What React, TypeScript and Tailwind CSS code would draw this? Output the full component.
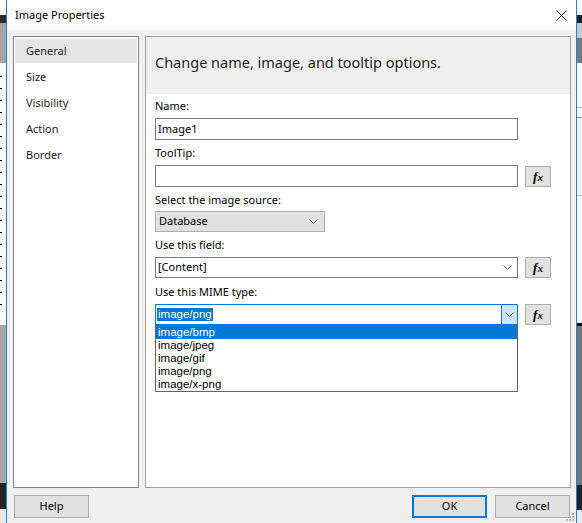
import React from 'react';

const font = { fontFamily: '"Noto Sans", "Segoe UI", sans-serif' };
const listFont = { fontFamily: '"Liberation Sans", Arial, sans-serif' };

const Fx: React.FC = () => (
  <button className="ml-[7px] flex h-[21px] w-[26px] items-center justify-center border border-[#adadad] bg-[#e1e1e1] text-black">
    <span className="text-[13px] font-bold italic leading-none" style={{ fontFamily: '"Liberation Serif", serif' }}>
      f<span className="text-[11px]">x</span>
    </span>
  </button>
);

const Chevron: React.FC = () => (
  <svg width="9" height="5" viewBox="0 0 9 5" className="text-[#606060]">
    <polyline points="0.5,0.5 4.5,4.5 8.5,0.5" fill="none" stroke="currentColor" strokeWidth="1" />
  </svg>
);

const Label: React.FC<{ children: React.ReactNode; className?: string }> = ({ children, className }) => (
  <div className={`h-[16px] text-[11px] leading-[16px] text-black ${className ?? ''}`}>{children}</div>
);

const LeftStrip: React.FC = () => (
  <div className="flex w-[6px] shrink-0 flex-col">
    <div className="h-[15px] bg-white" />
    <div className="h-[8px] bg-[#2b2b2b]" />
    <div className="h-[40px] bg-[#a6a6a6]" />
    <div className="flex h-[262px] flex-col bg-white pt-[13px]">
      {Array.from({ length: 20 }).map((_, i) => (
        <div key={i} className="mb-[11px] h-px w-[2px] bg-black" />
      ))}
    </div>
    <div className="h-[158px] bg-[#a6a6a6]" />
    <div className="h-[26px] bg-[#252525]" />
    <div className="flex-1 bg-[#e8e8e8]" />
  </div>
);

const RightStrip: React.FC = () => (
  <div className="flex w-[5px] shrink-0 flex-col">
    <div className="h-[15px] bg-white" />
    <div className="h-[8px] bg-[#222]" />
    <div className="h-[15px] bg-[#c8c8c8]" />
    <div className="h-[25px] bg-[#7a7a7a]" />
    <div className="h-[45px] border-b border-[#bbb] bg-white" />
    <div className="h-[10px] border-b border-[#888] bg-white" />
    <div className="h-[78px] border-b border-[#bbb] bg-[#f4f4f4]" />
    <div className="h-[127px] bg-white" />
    <div className="h-[3px] bg-black" />
    <div className="h-[159px] bg-[#777]" />
    <div className="h-[25px] bg-[#222]" />
    <div className="flex-1 bg-[#e8e8e8]" />
  </div>
);

const navItems = ['General', 'Size', 'Visibility', 'Action', 'Border'];
const mimeTypes = ['image/bmp', 'image/jpeg', 'image/gif', 'image/png', 'image/x-png'];

export default function App() {
  return (
    <div className="flex h-[523px] w-[582px] overflow-hidden bg-white" style={font}>
      <LeftStrip />
      <div className="flex w-[571px] shrink-0 flex-col border-x border-[#1883d7]">
        {/* title bar */}
        <div className="flex h-[30px] items-center justify-between bg-white pl-[8px] pr-[9px]">
          <span className="text-[11px] text-black">Image Properties</span>
          <svg width="11" height="11" viewBox="0 0 11 11">
            <path d="M0.5 0.5 L10.5 10.5 M10.5 0.5 L0.5 10.5" stroke="#111" strokeWidth="1" />
          </svg>
        </div>

        <div className="flex flex-1 flex-col bg-[#f0f0f0]">
          <div className="flex h-[458px] gap-[6px] pl-[6px] pr-[5px] pt-[6px]">
            {/* nav */}
            <div className="w-[126px] border border-[#828790] bg-white px-px pt-px">
              {navItems.map((item, i) => (
                <div key={item} className="h-[26px] py-px">
                  <div
                    className={`flex h-full items-center pl-[11px] text-[11px] text-[#1e1e1e] ${
                      i === 0 ? 'bg-[#e5e5e5]' : ''
                    }`}
                  >
                    {item}
                  </div>
                </div>
              ))}
            </div>

            {/* content */}
            <div className="flex flex-1 flex-col border border-[#a0a0a0] bg-white">
              <div className="flex h-[57px] items-center bg-[#f0f0f0] pb-[5px] pl-[9px]">
                <span className="text-[14.5px] text-[#1e1e1e]">Change name, image, and tooltip options.</span>
              </div>

              <div className="flex flex-col pl-[9px]">
                <Label className="mt-[4px]">Name:</Label>
                <div className="mt-[4px] flex h-[22px] w-[363px] items-center border border-[#7a7a7a] bg-white pl-[2px] text-[11px] text-black">
                  Image1
                </div>

                <Label className="mt-[5px]">ToolTip:</Label>
                <div className="mt-[4px] flex items-center">
                  <div className="h-[22px] w-[363px] border border-[#7a7a7a] bg-white" />
                  <Fx />
                </div>

                <Label className="mt-[5px]">Select the image source:</Label>
                <div className="mt-[3px] flex h-[21px] w-[170px] items-center justify-between border border-[#adadad] bg-[#e1e1e1] pl-[3px] pr-[6px] text-[11px] text-black">
                  <span>Database</span>
                  <Chevron />
                </div>

                <Label className="mt-[5px]">Use this field:</Label>
                <div className="mt-[4px] flex items-center">
                  <div className="flex h-[21px] w-[363px] items-center justify-between border border-[#7a7a7a] bg-white pl-[2px] pr-[5px] text-[11px] text-black">
                    <span>[Content]</span>
                    <Chevron />
                  </div>
                  <Fx />
                </div>

                <Label className="mt-[6px]">Use this MIME type:</Label>
                <div className="relative mt-[4px] flex items-center">
                  <div className="flex h-[21px] w-[363px] items-center border border-[#0078d7] bg-white">
                    <div className="flex flex-1 items-center pl-[1px]">
                      <span className="bg-[#0078d7] px-[1px] text-[11.5px] leading-[13px] text-white" style={listFont}>
                        image/png
                      </span>
                    </div>
                    <div className="flex h-full w-[16px] items-center justify-center border-l border-[#0078d7] bg-[#cce4f7]">
                      <Chevron />
                    </div>
                  </div>
                  <Fx />

                  <div className="absolute left-0 top-[21px] w-[363px] border border-[#646464] bg-white" style={listFont}>
                    {mimeTypes.map((m, i) => (
                      <div
                        key={m}
                        className={`h-[13px] pl-[2px] text-[11.5px] leading-[13px] ${
                          i === 0 ? 'bg-[#0078d7] text-white' : 'text-black'
                        }`}
                      >
                        {m}
                      </div>
                    ))}
                  </div>
                </div>
              </div>
            </div>
          </div>

          {/* footer */}
          <div className="relative mt-[7px] flex items-start pl-[7px] pr-[6px]">
            <button className="h-[23px] w-[75px] border border-[#adadad] bg-[#e1e1e1] text-[11px] text-black">Help</button>
            <div className="ml-auto flex gap-[8px]">
              <button className="h-[23px] w-[75px] border-2 border-[#0078d7] bg-[#e1e1e1] text-[11px] text-black">OK</button>
              <button className="h-[23px] w-[75px] border border-[#adadad] bg-[#e1e1e1] text-[11px] text-black">Cancel</button>
            </div>
            <svg width="12" height="12" viewBox="0 0 12 12" className="absolute right-[1px] top-[17px]">
              <g fill="#b4b4b4">
                <rect x="9" y="1" width="2" height="2" />
                <rect x="6" y="4" width="2" height="2" />
                <rect x="9" y="4" width="2" height="2" />
                <rect x="3" y="7" width="2" height="2" />
                <rect x="6" y="7" width="2" height="2" />
                <rect x="9" y="7" width="2" height="2" />
              </g>
            </svg>
          </div>
        </div>
      </div>
      <RightStrip />
    </div>
  );
}
